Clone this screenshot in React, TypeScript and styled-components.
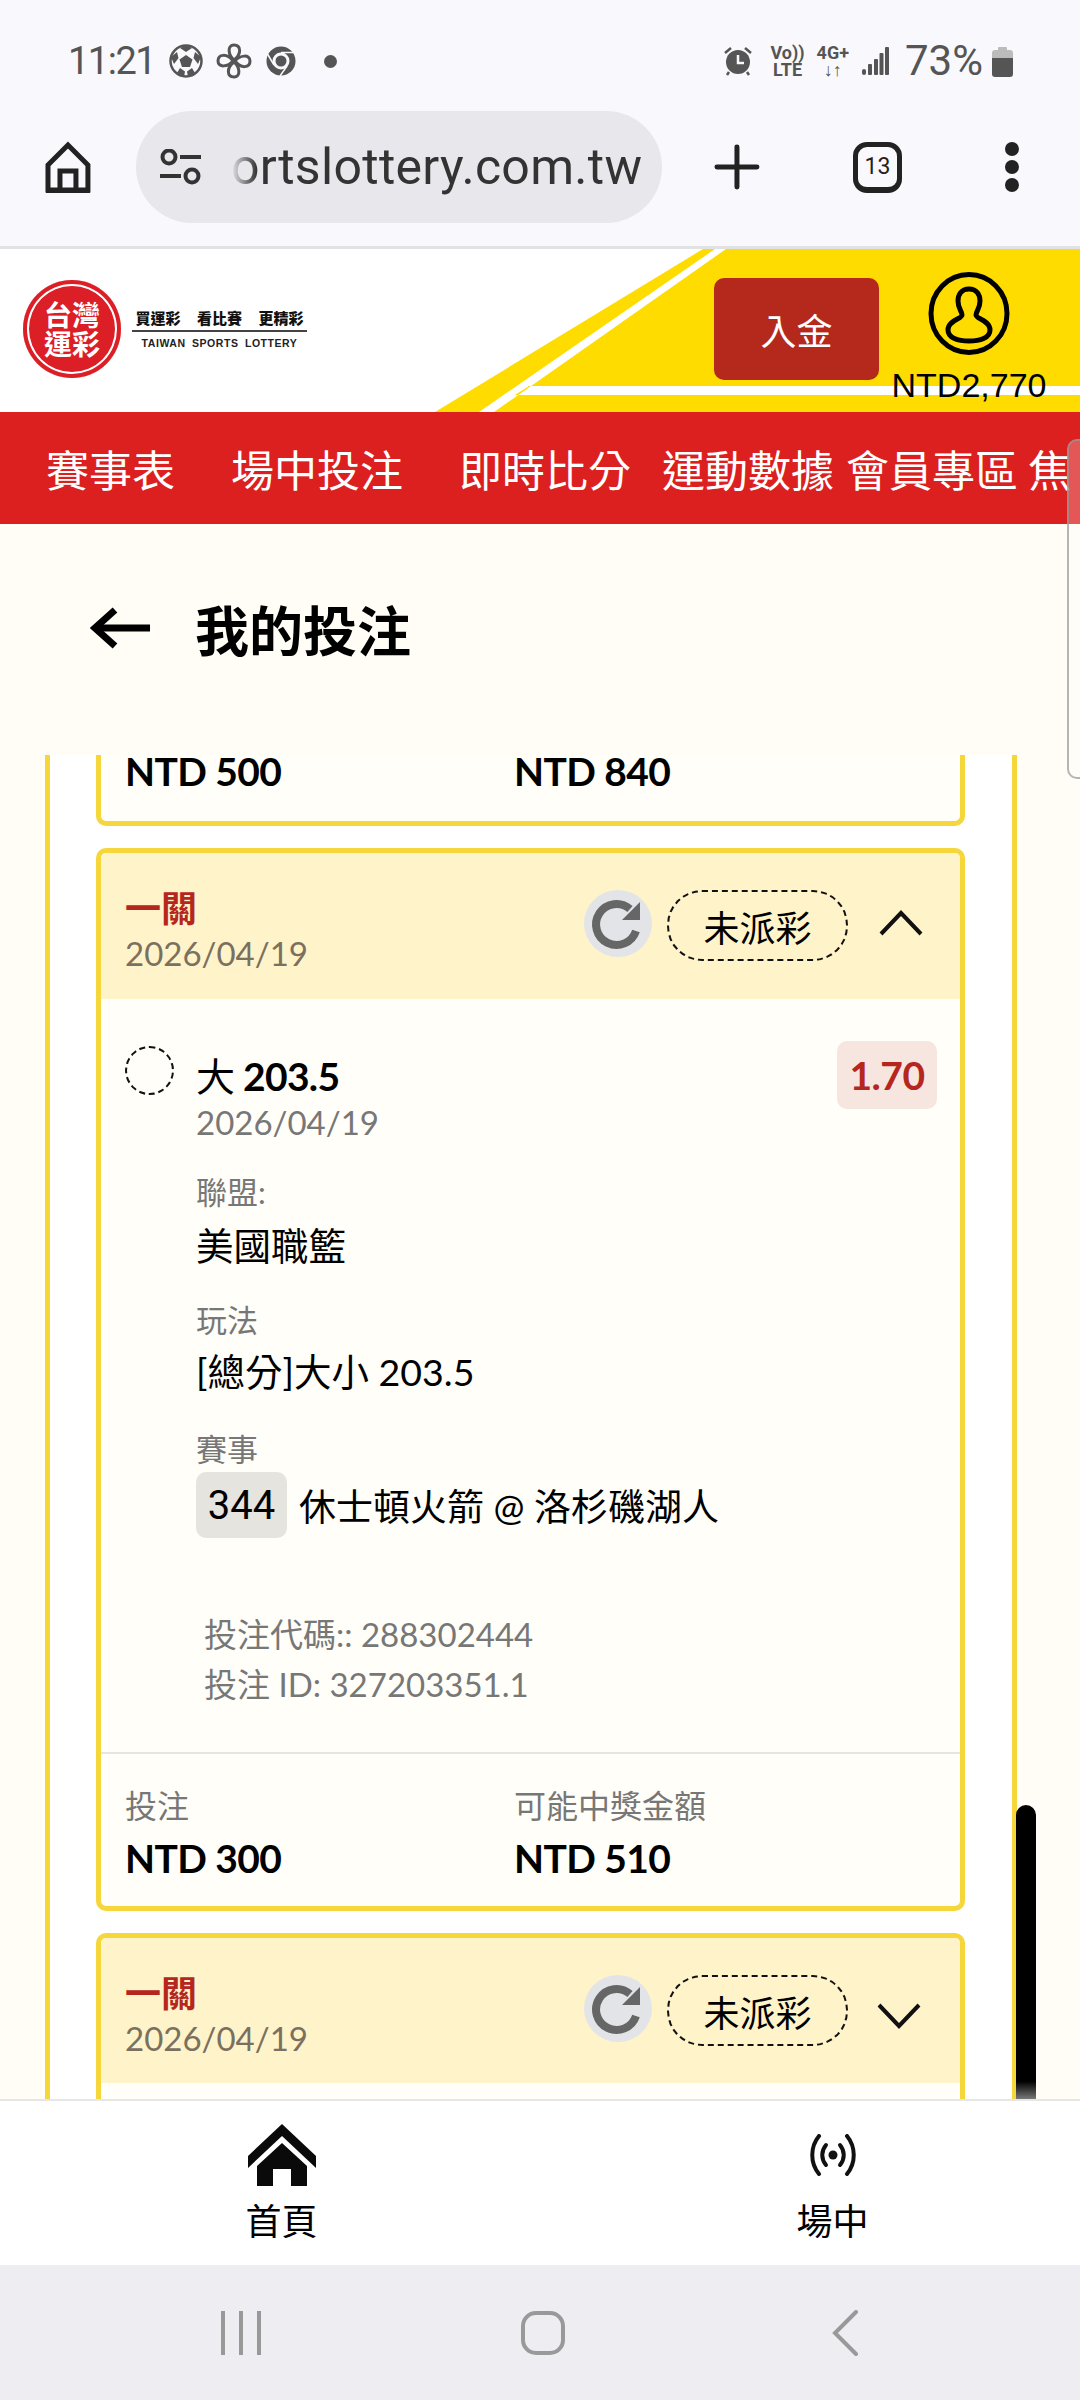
import styled, { createGlobalStyle } from "styled-components";

const GlobalStyle = createGlobalStyle`
  html, body {
    margin: 0;
    padding: 0;
    background: #fffdf6;
  }
  * {
    box-sizing: border-box;
  }
`;

const Frame = styled.div`
  position: relative;
  width: 1080px;
  height: 2400px;
  display: flex;
  flex-direction: column;
  overflow: hidden;
  background: #fffdf6;
  font-family: Lato, "Noto Sans CJK TC", sans-serif;
  color: #000;
`;

/* phone status bar */
const StatusBar = styled.div`
  height: 100px;
  padding: 44px 67px 0 68px;
  display: flex;
  align-items: flex-start;
  justify-content: space-between;
  background: #f8f8fd;
  color: #555;
  font-family: Roboto, sans-serif;
`;

const StatusGroup = styled.div`
  display: flex;
  align-items: center;
  height: 34px;
`;

const Clock = styled.span`
  font-size: 38px;
  line-height: 34px;
  letter-spacing: -1.5px;
  margin-right: 14px;
`;

const StatusIcon = styled.svg<{ $right?: number }>`
  display: block;
  margin-right: ${(p) => p.$right ?? 0}px;
`;

const TinyStack = styled.div<{ $right: number }>`
  display: flex;
  flex-direction: column;
  align-items: center;
  margin-right: ${(p) => p.$right}px;
  font-size: 18px;
  font-weight: 700;
  line-height: 17px;
  color: #555;
`;

const Battery = styled.span`
  font-size: 42px;
  line-height: 34px;
  margin: 0 9px 0 16px;
`;

/* browser toolbar */
const BrowserBar = styled.div`
  height: 146px;
  padding: 11px 60px 23px 45px;
  display: flex;
  align-items: center;
  background: #f8f8fd;
`;

const AddressPill = styled.div`
  width: 527px;
  height: 112px;
  margin-left: 45px;
  padding-left: 24px;
  display: flex;
  align-items: center;
  border-radius: 56px;
  background: #e7e7ec;
`;

const UrlText = styled.span`
  margin-left: 30px;
  font-family: Roboto, sans-serif;
  font-size: 50px;
  letter-spacing: 0.3px;
  color: #333;
  white-space: nowrap;
  -webkit-mask-image: linear-gradient(90deg, transparent 0, #000 26px);
  mask-image: linear-gradient(90deg, transparent 0, #000 26px);
`;

const PlusIcon = styled.svg`
  margin-left: 52px;
`;

const TabBadge = styled.div`
  width: 49px;
  height: 51px;
  margin-left: 93px;
  display: flex;
  align-items: center;
  justify-content: center;
  border: 5px solid #222;
  border-bottom-width: 6px;
  border-radius: 14px;
  font-family: Roboto, sans-serif;
  font-size: 23px;
  color: #222;
`;

const MenuDots = styled.svg`
  margin-left: 102px;
`;

const Rule = styled.div`
  height: 3px;
  background: #e2e2e4;
`;

/* site header */
const SiteHeader = styled.header`
  position: relative;
  height: 163px;
  display: flex;
  background: #fff;
`;

const HeaderArt = styled.svg`
  position: absolute;
  top: 0;
  left: 0;
`;

const LogoBlock = styled.div`
  position: relative;
  display: flex;
  align-items: center;
  padding: 31px 0 0 23px;
  height: 128px;
`;

const Seal = styled.div`
  width: 98px;
  height: 98px;
  display: flex;
  flex-direction: column;
  align-items: center;
  justify-content: center;
  border-radius: 50%;
  background: #dc1f26;
  box-shadow: inset 0 0 0 4px #dc1f26, inset 0 0 0 6px #fff;
  color: #fff;
  font-size: 28px;
  font-weight: 700;
  line-height: 29px;
  font-family: "Noto Sans CJK TC", sans-serif;
`;

const Tagline = styled.div`
  margin-left: 11px;
  width: 175px;
  display: flex;
  flex-direction: column;
  align-items: center;
`;

const TaglineCn = styled.div`
  font-family: "Noto Sans CJK TC", sans-serif;
  font-size: 15px;
  font-weight: 900;
  line-height: 21px;
  word-spacing: 13px;
  color: #111;
  white-space: nowrap;
`;

const TaglineEn = styled.div`
  width: 100%;
  margin-top: 2px;
  padding-top: 3px;
  border-top: 2px solid #444;
  font-family: "Liberation Sans", sans-serif;
  font-size: 10.5px;
  font-weight: 700;
  line-height: 16px;
  letter-spacing: 0.55px;
  word-spacing: 3px;
  text-align: center;
  color: #222;
  white-space: nowrap;
`;

const HeaderRight = styled.div`
  position: relative;
  margin-left: auto;
  display: flex;
  align-items: flex-start;
`;

const DepositButton = styled.div`
  width: 165px;
  height: 102px;
  margin-top: 29px;
  display: flex;
  align-items: center;
  justify-content: center;
  border-radius: 10px;
  background: #b5281c;
  color: #fff;
  font-family: "Noto Sans CJK TC", sans-serif;
  font-size: 36px;
`;

const Account = styled.div`
  width: 201px;
  padding: 23px 34px 0 13px;
  display: flex;
  flex-direction: column;
  align-items: center;
`;

const Balance = styled.div`
  margin-top: 14px;
  font-family: "Liberation Sans", sans-serif;
  font-size: 34px;
  line-height: 32px;
  white-space: nowrap;
`;

/* red nav */
const NavBar = styled.nav`
  height: 112px;
  padding-left: 46px;
  display: flex;
  align-items: center;
  overflow: hidden;
  background: #dc1f1f;
`;

const NavItem = styled.span<{ $gap: number }>`
  flex: none;
  margin-right: ${(p) => p.$gap}px;
  font-family: "Noto Sans CJK TC", sans-serif;
  font-size: 43px;
  color: #fff;
`;

const OverlayThumb = styled.div`
  position: absolute;
  top: 439px;
  right: 0;
  width: 13px;
  height: 340px;
  border: 2px solid rgba(150, 150, 150, 0.7);
  border-right: 0;
  border-radius: 10px 0 0 10px;
  background: rgba(255, 255, 255, 0.25);
`;

const PageTitleRow = styled.div`
  height: 231px;
  padding: 0 0 23px 90px;
  display: flex;
  align-items: center;
`;

const PageTitle = styled.h1`
  margin: 0 0 0 45px;
  font-family: "Noto Sans CJK TC", sans-serif;
  font-size: 54px;
  font-weight: 700;
`;

/* bets list */
const ListPanel = styled.div`
  flex: none;
  height: 1344px;
  margin: 0 63px 0 45px;
  padding: 0 47px 0 46px;
  border-left: 5px solid #f5d73c;
  border-right: 5px solid #f5d73c;
  background: #fff;
  clip-path: inset(-12px 0 0 0);
`;

const BetCard = styled.section`
  margin-bottom: 22px;
  border: 5px solid #f5d73c;
  border-radius: 10px;
  background: #fffef8;
  overflow: hidden;
`;

const CutCard = styled.section`
  height: 71px;
  margin-bottom: 22px;
  border: 5px solid #f5d73c;
  border-top: 0;
  border-radius: 0 0 10px 10px;
  background: #fffef8;
`;

const CardHead = styled.div<{ $tall?: boolean }>`
  height: ${(p) => (p.$tall ? 146 : 145)}px;
  padding: 37px 37px 0 24px;
  display: flex;
  align-items: flex-start;
  background: #fff3c9;
`;

const HeadText = styled.div`
  margin-right: auto;
`;

const LegTitle = styled.div`
  font-family: "Noto Sans CJK TC", sans-serif;
  font-size: 36px;
  font-weight: 700;
  line-height: 32px;
  color: #b5261e;
`;

const LegDate = styled.div`
  margin-top: 11px;
  font-size: 33px;
  line-height: 40px;
  color: #7a7060;
`;

const RefreshDisc = styled.div`
  width: 68px;
  height: 67px;
  border-radius: 50%;
  background: #e3e4e8;
`;

const StatusPill = styled.div`
  width: 181px;
  height: 71px;
  margin: 0 31px 0 15px;
  display: flex;
  align-items: center;
  justify-content: center;
  border: 2px dashed #111;
  border-radius: 35px;
  font-family: "Noto Sans CJK TC", sans-serif;
  font-size: 36px;
`;

const Chevron = styled.svg<{ $top: number; $shift?: number }>`
  margin-top: ${(p) => p.$top}px;
  transform: translateX(${(p) => p.$shift ?? 0}px);
`;

const BetBody = styled.div`
  padding: 42px 23px 43px 24px;
  border-bottom: 2px solid #e6e5df;
`;

const CollapsedBody = styled.div`
  height: 120px;
`;

const SelectionRow = styled.div`
  display: flex;
  align-items: flex-start;
`;

const DashedDot = styled.div`
  flex: none;
  width: 49px;
  height: 49px;
  margin: 5px 22px 0 0;
  border: 2px dashed #111;
  border-radius: 50%;
`;

const SelectionText = styled.div`
  margin: 10px auto 0 0;
`;

const SelectionName = styled.div`
  font-size: 39px;
  font-weight: 700;
  line-height: 50px;
  letter-spacing: -0.7px;
  span {
    font-weight: 400;
  }
`;

const SelectionDate = styled.div`
  font-size: 33px;
  line-height: 42px;
  color: #777;
`;

const OddsBadge = styled.div`
  width: 100px;
  height: 68px;
  display: flex;
  align-items: center;
  justify-content: center;
  border-radius: 10px;
  background: #f7e6df;
  color: #b5261e;
  font-size: 39px;
  font-weight: 700;
  letter-spacing: -0.5px;
`;

const Details = styled.div`
  margin-left: 71px;
`;

const FieldLabel = styled.div<{ $top: number }>`
  margin-top: ${(p) => p.$top}px;
  font-size: 31px;
  line-height: 40px;
  color: #777;
`;

const FieldValue = styled.div<{ $top: number }>`
  margin-top: ${(p) => p.$top}px;
  font-size: 37.5px;
  line-height: 44px;
`;

const MatchRow = styled.div`
  margin-top: 3px;
  display: flex;
  align-items: center;
  font-size: 37px;
`;

const MatchCode = styled.div`
  width: 91px;
  height: 66px;
  margin-right: 12px;
  display: flex;
  align-items: center;
  justify-content: center;
  border-radius: 10px;
  background: #e5e4df;
  font-family: Roboto, sans-serif;
  font-size: 40px;
`;

const BetCodes = styled.div`
  margin: 71px 0 0 8px;
  font-size: 33px;
  line-height: 50px;
  color: #777;
`;

const CardFoot = styled.div`
  padding: 32px 24px 26px;
  display: grid;
  grid-template-columns: 389px 1fr;
`;

const CutFoot = styled(CardFoot)`
  padding-top: 0;
`;

const FootLabel = styled.div`
  font-size: 32px;
  line-height: 40px;
  color: #777;
`;

const FootValue = styled.div`
  margin-top: 10px;
  font-size: 39px;
  font-weight: 700;
  line-height: 44px;
  letter-spacing: -0.6px;
`;

const CutValue = styled(FootValue)`
  margin-top: 0;
  line-height: 32px;
`;

const PageThumb = styled.div`
  position: absolute;
  top: 1805px;
  left: 1016px;
  width: 20px;
  height: 294px;
  border-radius: 10px 10px 0 0;
  background: linear-gradient(180deg, #000 94%, #777 100%);
`;

/* bottom tabs */
const TabBar = styled.div`
  height: 166px;
  padding-left: 6px;
  display: grid;
  grid-template-columns: 551px 551px;
  border-top: 2px solid #e6e6e6;
  background: #fff;
  overflow: hidden;
`;

const TabItem = styled.div`
  display: flex;
  flex-direction: column;
  align-items: center;
  font-family: "Noto Sans CJK TC", sans-serif;
  font-size: 36px;
`;

const TabIconBox = styled.div`
  height: 72px;
  margin-top: 18px;
  display: flex;
  align-items: center;
  justify-content: center;
`;

const TabLabel = styled.div`
  margin-top: 3px;
  line-height: 50px;
`;

/* android nav */
const SystemBar = styled.div`
  flex: 1;
  display: flex;
  align-items: center;
  justify-content: center;
  padding-left: 6px;
  background: #eeeef2;
`;

const SystemSlot = styled.div`
  width: 302px;
  display: flex;
  justify-content: center;
`;

const SoccerIcon = () => (
  <StatusIcon $right={13} width="34" height="34" viewBox="0 0 34 34">
    <circle cx="17" cy="17" r="15.500" fill="#f8f8fd" stroke="#555" strokeWidth="2.500" />
    <path d="M17 11l6.500 4.500-2.500 7.500h-8l-2.500-7.500z" fill="#555" />
    <path d="M17 1l6 3-6 4-6-4zM2 13l6-5 1.500 6-4.500 6zM32 13l-6-5-1.500 6 4.500 6zM8 29l3-5 5 3.500-1 5.500zM26 29l-3-5-5 3.500 1 5.500z" fill="#555" />
  </StatusIcon>
);

const FanIcon = () => (
  <StatusIcon $right={14} width="36" height="36" viewBox="0 0 36 36" fill="none" stroke="#555" strokeWidth="3">
    <path d="M18 17C12 12 11 2 18 2c7 0 8 9 0 15z" />
    <path d="M19 18c5-6 15-7 15 0 0 7-9 8-15 0z" />
    <path d="M18 19c6 5 7 15 0 15-7 0-8-9 0-15z" />
    <path d="M17 18c-5 6-15 7-15 0 0-7 9-8 15 0z" />
  </StatusIcon>
);

const ChromeIcon = () => (
  <StatusIcon $right={28} width="30" height="30" viewBox="0 0 30 30">
    <circle cx="15" cy="15" r="14.500" fill="#555" />
    <circle cx="15" cy="15" r="8.500" fill="#f8f8fd" />
    <circle cx="15" cy="15" r="5.500" fill="#555" />
    <path d="M15 6.500h14M8 19 1.500 8M21 20l-7 10" stroke="#f8f8fd" strokeWidth="1.500" />
  </StatusIcon>
);

const AlarmIcon = () => (
  <StatusIcon $right={17} width="30" height="30" viewBox="0 0 30 30">
    <circle cx="15" cy="16" r="12" fill="#555" />
    <path d="M15 9v8h6" fill="none" stroke="#f8f8fd" strokeWidth="2.500" />
    <path d="M2 7l6-5M28 7l-6-5M6 26l-2 3M24 26l2 3" stroke="#555" strokeWidth="2.500" />
  </StatusIcon>
);

const SignalIcon = () => (
  <StatusIcon width="27" height="28" viewBox="0 0 27 28" fill="#555">
    <rect x="0" y="22" width="4" height="6" rx="2" />
    <rect x="6" y="17" width="4" height="11" rx="1" />
    <rect x="12" y="12" width="4" height="16" rx="1" />
    <rect x="17.500" y="6" width="4" height="22" rx="1" />
    <rect x="23" y="0" width="4" height="28" rx="1" />
  </StatusIcon>
);

const BatteryIcon = () => (
  <StatusIcon width="21" height="31" viewBox="0 0 21 31">
    <path d="M6 2a1 1 0 0 1 1-1h7a1 1 0 0 1 1 1v2h3a3 3 0 0 1 3 3v5H0V7a3 3 0 0 1 3-3h3z" fill="#bbb" />
    <path d="M0 12h21v16a3 3 0 0 1-3 3H3a3 3 0 0 1-3-3z" fill="#555" />
  </StatusIcon>
);

const RefreshIcon = () => (
  <RefreshDisc>
    <svg width="68" height="67" viewBox="0 0 68 67" fill="none">
      <path d="M46 19A20.500 20.500 0 1 0 52 41" stroke="#666" strokeWidth="8" />
      <path d="M56 12v18H38z" fill="#666" />
    </svg>
  </RefreshDisc>
);

const CaretUp = () => (
  <Chevron $top={20} width="44" height="26" viewBox="0 0 44 26" fill="none" stroke="#111" strokeWidth="4">
    <path d="M2 24 22 3l20 21" />
  </Chevron>
);

const CaretDown = () => (
  <Chevron $top={28} $shift={-2} width="44" height="26" viewBox="0 0 44 26" fill="none" stroke="#111" strokeWidth="4">
    <path d="M2 2l20 21L42 2" />
  </Chevron>
);

const LiveIcon = () => (
  <svg width="52" height="42" viewBox="0 0 52 42" fill="none" stroke="#111" strokeWidth="4" strokeLinecap="round">
    <path d="M12 2C3 13 3 29 12 40" />
    <path d="M19 11c-5 6-5 14 0 20" />
    <path d="M33 11c5 6 5 14 0 20" />
    <path d="M40 2c9 11 9 27 0 38" />
    <circle cx="26" cy="21" r="4.500" fill="#111" stroke="none" />
  </svg>
);

const navItems = [
  { label: "賽事表", gap: 56 },
  { label: "場中投注", gap: 56 },
  { label: "即時比分", gap: 31 },
  { label: "運動數據", gap: 12 },
  { label: "會員專區", gap: 10 },
  { label: "焦", gap: 0 },
];

const App = () => {
  return (
    <Frame>
      <GlobalStyle />
      <StatusBar>
        <StatusGroup>
          <Clock>11:21</Clock>
          <SoccerIcon />
          <FanIcon />
          <ChromeIcon />
          <StatusIcon width="13" height="13" viewBox="0 0 13 13">
            <circle cx="6.500" cy="6.500" r="6.500" fill="#555" />
          </StatusIcon>
        </StatusGroup>
        <StatusGroup>
          <AlarmIcon />
          <TinyStack $right={12}>
            <div>Vo))</div>
            <div>LTE</div>
          </TinyStack>
          <TinyStack $right={13}>
            <div>4G+</div>
            <div>↓↑</div>
          </TinyStack>
          <SignalIcon />
          <Battery>73%</Battery>
          <BatteryIcon />
        </StatusGroup>
      </StatusBar>

      <BrowserBar>
        <svg width="46" height="52" viewBox="0 0 46 52" fill="none" stroke="#222" strokeWidth="5">
          <path d="M3 49V24L23 4l20 20v25z" />
          <path d="M15 49V30h16v19" />
          <path d="M1 50h44" strokeWidth="4" />
        </svg>
        <AddressPill>
          <svg width="41" height="36" viewBox="0 0 41 36" fill="none" stroke="#333" strokeWidth="4">
            <circle cx="9" cy="8" r="6.500" />
            <path d="M20 8h21" />
            <path d="M0 27h21" />
            <circle cx="32" cy="27" r="6.500" />
          </svg>
          <UrlText>ortslottery.com.tw</UrlText>
        </AddressPill>
        <PlusIcon width="46" height="46" viewBox="0 0 46 46" stroke="#222" strokeWidth="5" strokeLinecap="round">
          <path d="M23 3v40M3 23h40" />
        </PlusIcon>
        <TabBadge>13</TabBadge>
        <MenuDots width="16" height="50" viewBox="0 0 16 50" fill="#222">
          <circle cx="8" cy="7" r="7" />
          <circle cx="8" cy="25" r="7" />
          <circle cx="8" cy="43" r="7" />
        </MenuDots>
      </BrowserBar>
      <Rule />

      <SiteHeader>
        <HeaderArt width="1080" height="163" viewBox="0 0 1080 163">
          <path d="M435 163 703 0h12L479 163z" fill="#ffdc00" />
          <path d="M494 163 726 0h354v137H529l-14 9h565v17z" fill="#ffdc00" />
        </HeaderArt>
        <LogoBlock>
          <Seal>
            <div>台灣</div>
            <div>運彩</div>
          </Seal>
          <Tagline>
            <TaglineCn>買運彩 看比賽 更精彩</TaglineCn>
            <TaglineEn>TAIWAN SPORTS LOTTERY</TaglineEn>
          </Tagline>
        </LogoBlock>
        <HeaderRight>
          <DepositButton>入金</DepositButton>
          <Account>
            <svg width="82" height="83" viewBox="0 0 82 83" fill="none" stroke="#000" strokeWidth="5">
              <ellipse cx="41" cy="41.500" rx="38" ry="39" />
              <path d="M41 17C33 17 30 23 30 29c0 8 4 10 4 14s-14 5-14 15c0 8 10 11 21 11s21-3 21-11c0-10-14-11-14-15s4-6 4-14c0-6-3-12-11-12z" />
            </svg>
            <Balance>NTD2,770</Balance>
          </Account>
        </HeaderRight>
      </SiteHeader>

      <NavBar>
        {navItems.map((item) => (
          <NavItem key={item.label} $gap={item.gap}>
            {item.label}
          </NavItem>
        ))}
      </NavBar>
      <OverlayThumb />

      <PageTitleRow>
        <svg width="60" height="42" viewBox="0 0 60 42" fill="none" stroke="#000" strokeWidth="7">
          <path d="M60 21H5" />
          <path d="M25 3 5 21l20 18" />
        </svg>
        <PageTitle>我的投注</PageTitle>
      </PageTitleRow>

      <ListPanel>
        <CutCard>
          <CutFoot>
            <CutValue>NTD 500</CutValue>
            <CutValue>NTD 840</CutValue>
          </CutFoot>
        </CutCard>

        <BetCard>
          <CardHead $tall>
            <HeadText>
              <LegTitle>一關</LegTitle>
              <LegDate>2026/04/19</LegDate>
            </HeadText>
            <RefreshIcon />
            <StatusPill>未派彩</StatusPill>
            <CaretUp />
          </CardHead>
          <BetBody>
            <SelectionRow>
              <DashedDot />
              <SelectionText>
                <SelectionName>
                  <span>大</span> 203.5
                </SelectionName>
                <SelectionDate>2026/04/19</SelectionDate>
              </SelectionText>
              <OddsBadge>1.70</OddsBadge>
            </SelectionRow>
            <Details>
              <FieldLabel $top={29}>聯盟:</FieldLabel>
              <FieldValue $top={12}>美國職籃</FieldValue>
              <FieldLabel $top={32}>玩法</FieldLabel>
              <FieldValue $top={10}>[總分]大小 203.5</FieldValue>
              <FieldLabel $top={35}>賽事</FieldLabel>
              <MatchRow>
                <MatchCode>344</MatchCode>
                休士頓火箭 @ 洛杉磯湖人
              </MatchRow>
              <BetCodes>
                <div>投注代碼:: 288302444</div>
                <div>投注 ID: 327203351.1</div>
              </BetCodes>
            </Details>
          </BetBody>
          <CardFoot>
            <div>
              <FootLabel>投注</FootLabel>
              <FootValue>NTD 300</FootValue>
            </div>
            <div>
              <FootLabel>可能中獎金額</FootLabel>
              <FootValue>NTD 510</FootValue>
            </div>
          </CardFoot>
        </BetCard>

        <BetCard>
          <CardHead>
            <HeadText>
              <LegTitle>一關</LegTitle>
              <LegDate>2026/04/19</LegDate>
            </HeadText>
            <RefreshIcon />
            <StatusPill>未派彩</StatusPill>
            <CaretDown />
          </CardHead>
          <CollapsedBody />
        </BetCard>
      </ListPanel>
      <PageThumb />

      <TabBar>
        <TabItem>
          <TabIconBox>
            <svg width="68" height="62" viewBox="0 0 68 62" fill="#0a0a0a">
              <path d="M34 0 68 32v12L34 12 0 44V32z" />
              <path d="M34 19 59 42v20H43V45H25v17H9V42z" />
            </svg>
          </TabIconBox>
          <TabLabel>首頁</TabLabel>
        </TabItem>
        <TabItem>
          <TabIconBox>
            <LiveIcon />
          </TabIconBox>
          <TabLabel>場中</TabLabel>
        </TabItem>
      </TabBar>

      <SystemBar>
        <SystemSlot>
          <svg width="42" height="44" viewBox="0 0 42 44" stroke="#999" strokeWidth="4">
            <path d="M3 0v44M21 0v44M39 0v44" />
          </svg>
        </SystemSlot>
        <SystemSlot>
          <svg width="44" height="44" viewBox="0 0 44 44" fill="none" stroke="#999" strokeWidth="4">
            <rect x="2" y="2" width="40" height="40" rx="13" />
          </svg>
        </SystemSlot>
        <SystemSlot>
          <svg width="26" height="46" viewBox="0 0 26 46" fill="none" stroke="#999" strokeWidth="4" strokeLinecap="round">
            <path d="M24 2 3 23l21 21" />
          </svg>
        </SystemSlot>
      </SystemBar>
    </Frame>
  );
};

export default App;
